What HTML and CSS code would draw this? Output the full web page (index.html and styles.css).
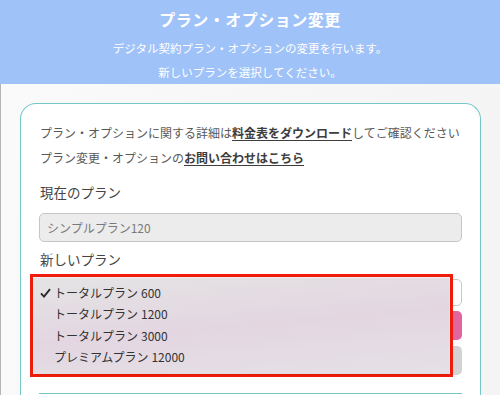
FILE: index.html
```html
<!DOCTYPE html>
<html lang="ja">
<head>
    <meta charset="UTF-8">
    <meta name="viewport" content="width=device-width, initial-scale=1.0">
    <title>プラン・オプション変更</title>
    <link rel="stylesheet" href="styles.css">
</head>
<body>
    <div class="header">
        <h1>プラン・オプション変更</h1>
        <p>デジタル契約プラン・オプションの変更を行います。</p>
        <p>新しいプランを選択してください。</p>
    </div>

    <div class="main">
        <div class="card">
            <p class="note">プラン・オプションに関する詳細は<a href="#">料金表をダウンロード</a>してご確認ください</p>
            <p class="note">プラン変更・オプションの<a href="#">お問い合わせはこちら</a></p>

            <label class="field-label">現在のプラン</label>
            <div class="input disabled">シンプルプラン120</div>

            <label class="field-label">新しいプラン</label>
            <div class="select-wrap">
                <div class="select"></div>

                <!-- open dropdown, highlighted -->
                <div class="dropdown">
                    <ul class="menu">
                        <li class="checked">
                            <svg class="check" width="11" height="10" viewBox="0 0 11 10"><path d="M1 5.4 L4 8.6 L10 1.2" fill="none" stroke="#2a2a2a" stroke-width="1.9"/></svg>
                            トータルプラン<span class="num">600</span>
                        </li>
                        <li>トータルプラン<span class="num">1200</span></li>
                        <li>トータルプラン<span class="num">3000</span></li>
                        <li>プレミアムプラン<span class="num">12000</span></li>
                    </ul>
                </div>
            </div>

            <button class="btn btn-primary"></button>
            <button class="btn btn-cancel"></button>

            <div class="next"></div>
        </div>
    </div>
</body>
</html>
```

FILE: styles.css
```css
body {
    font-family: 'Noto Sans CJK JP', 'Noto Sans', sans-serif;
    margin: 0;
    background: #f5f5f5;
    overflow: hidden;
}
.header {
    background-color: #9fc2f8;
    color: white;
    text-align: center;
    height: 84px;
    padding-top: 7px;
    box-sizing: border-box;
}
.header h1 {
    margin: 0 0 5px 0;
    font-size: 16px;
    letter-spacing: 0.5px;
    line-height: 24px;
    font-weight: bold;
}
.header p {
    margin: 0;
    font-size: 11.5px;
    line-height: 24px;
}
.main {
    border-left: 1px solid #b4b4b4;
    padding: 19px 19px 0 19px;
    height: 311px;
    box-sizing: border-box;
    overflow: hidden;
    background: linear-gradient(100deg, #fafafa, #f4f4f4);
}
.card {
    background: white;
    border: 1.5px solid #74c7c7;
    border-bottom: none;
    border-radius: 16px 16px 0 0;
    padding: 16px 18px 0 18px;
    height: 300px;
}
.note {
    margin: 0;
    font-size: 12px;
    line-height: 25px;
    color: #595959;
    padding-left: 1px;
}
.note a {
    color: #3d3d3d;
    font-weight: bold;
    text-decoration: underline;
    text-underline-offset: 2px;
}
.field-label {
    display: block;
    font-size: 13.5px;
    line-height: 20px;
    color: #444;
    margin-top: 12px;
    padding-left: 1px;
}
.input {
    margin-top: 11px;
    height: 29px;
    box-sizing: border-box;
    border: 1px solid #c6c6c6;
    border-radius: 5px;
    font-size: 12px;
    line-height: 27px;
    padding-left: 7px;
}
.disabled {
    background: #ececec;
    color: #7a7a7a;
}
.input + .field-label {
    margin-top: 7px;
}
.select-wrap {
    position: relative;
    margin-top: 10px;
}
.select {
    height: 27px;
    box-sizing: border-box;
    border: 1px solid #c6c6c6;
    border-radius: 5px;
    background: white;
}
.dropdown {
    position: absolute;
    top: -5px;
    left: -9px;
    width: 423px;
    height: 103px;
    box-sizing: border-box;
    border: 3px solid #f11c0b;
    padding: 1px;
    background: #f7f3f5;
}
.menu {
    list-style: none;
    margin: 0;
    padding: 4px 0 0 0;
    height: 100%;
    box-sizing: border-box;
    background: linear-gradient(175deg, #e4e4e4 0%, #e3d6e1 50%, #e5e1e6 100%);
    box-shadow: 0 1px 3px rgba(0, 0, 0, 0.15);
}
.menu li {
    position: relative;
    font-size: 12px;
    line-height: 21.3px;
    color: #333;
    padding-left: 20px;
}
.num {
    margin-left: 3px;
}
.check {
    position: absolute;
    left: 6px;
    top: 6px;
}
.btn {
    display: block;
    width: 100%;
    height: 29px;
    border: none;
    border-radius: 5px;
    margin-top: 5px;
}
.btn-primary {
    background-color: #e2659d;
}
.btn-cancel {
    background-color: #d3d3d3;
    margin-top: 6px;
}
.next {
    margin-top: 18px;
    border-top: 1.5px solid #74c7c7;
}
```
